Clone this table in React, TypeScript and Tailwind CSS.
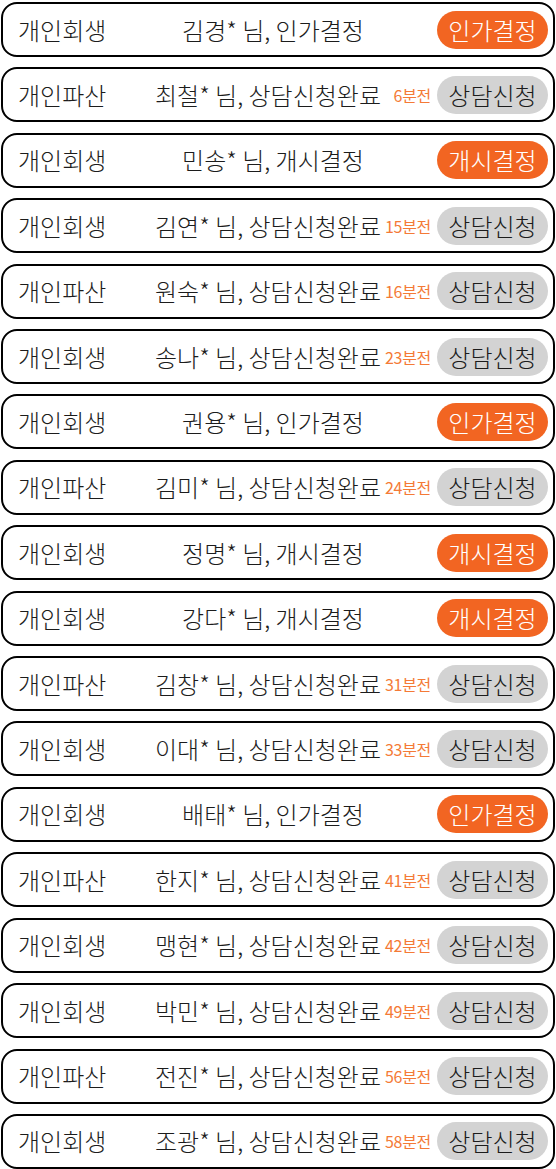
import React from "react";

type Row = { cat: string; name: string; msg: string; time?: string; badge: string; orange: boolean };

const rows: Row[] = [
  { cat: "개인회생", name: "김경*", msg: "인가결정", badge: "인가결정", orange: true },
  { cat: "개인파산", name: "최철*", msg: "상담신청완료", time: "6분전", badge: "상담신청", orange: false },
  { cat: "개인회생", name: "민송*", msg: "개시결정", badge: "개시결정", orange: true },
  { cat: "개인회생", name: "김연*", msg: "상담신청완료", time: "15분전", badge: "상담신청", orange: false },
  { cat: "개인파산", name: "원숙*", msg: "상담신청완료", time: "16분전", badge: "상담신청", orange: false },
  { cat: "개인회생", name: "송나*", msg: "상담신청완료", time: "23분전", badge: "상담신청", orange: false },
  { cat: "개인회생", name: "권용*", msg: "인가결정", badge: "인가결정", orange: true },
  { cat: "개인파산", name: "김미*", msg: "상담신청완료", time: "24분전", badge: "상담신청", orange: false },
  { cat: "개인회생", name: "정명*", msg: "개시결정", badge: "개시결정", orange: true },
  { cat: "개인회생", name: "강다*", msg: "개시결정", badge: "개시결정", orange: true },
  { cat: "개인파산", name: "김창*", msg: "상담신청완료", time: "31분전", badge: "상담신청", orange: false },
  { cat: "개인회생", name: "이대*", msg: "상담신청완료", time: "33분전", badge: "상담신청", orange: false },
  { cat: "개인회생", name: "배태*", msg: "인가결정", badge: "인가결정", orange: true },
  { cat: "개인파산", name: "한지*", msg: "상담신청완료", time: "41분전", badge: "상담신청", orange: false },
  { cat: "개인회생", name: "맹현*", msg: "상담신청완료", time: "42분전", badge: "상담신청", orange: false },
  { cat: "개인회생", name: "박민*", msg: "상담신청완료", time: "49분전", badge: "상담신청", orange: false },
  { cat: "개인파산", name: "전진*", msg: "상담신청완료", time: "56분전", badge: "상담신청", orange: false },
  { cat: "개인회생", name: "조광*", msg: "상담신청완료", time: "58분전", badge: "상담신청", orange: false },
];

export default function App() {
  return (
    <div
      className="w-[556px] h-[1169px] overflow-hidden bg-white px-[1px] pt-[2px] flex flex-col gap-[10.41px] text-[#1c1c1c]"
      style={{ fontFamily: '"Noto Sans CJK KR", "Noto Sans", sans-serif' }}
    >
      {rows.map((r, i) => (
        <div
          key={i}
          className="h-[55px] shrink-0 border-2 border-black rounded-[16px] flex items-center pl-[15px] pr-[5px]"
        >
          <span className="w-[137px] shrink-0 text-[24px] font-light leading-none whitespace-nowrap">{r.cat}</span>
          {r.time ? (
            <div className="flex-1 flex items-center pr-[6px]">
              <span className="text-[24px] font-light leading-none whitespace-nowrap">
                {r.name} 님, {r.msg}
              </span>
              <span className="ml-auto text-[16px] text-[#f47a36] leading-none whitespace-nowrap tracking-[-0.3px]">
                {r.time}
              </span>
            </div>
          ) : (
            <div className="flex-1 flex items-center">
              <span className="w-[236px] text-center text-[24px] font-light leading-none whitespace-nowrap">
                {r.name} 님, {r.msg}
              </span>
            </div>
          )}
          <div
            className={
              r.orange
                ? "w-[111px] h-[38px] shrink-0 rounded-full bg-[#f26522] text-white flex items-center justify-center text-[24px] font-light leading-none"
                : "w-[111px] h-[38px] shrink-0 rounded-full bg-[#d3d3d3] text-[#1c1c1c] flex items-center justify-center text-[24px] font-light leading-none"
            }
          >
            {r.badge}
          </div>
        </div>
      ))}
    </div>
  );
}
